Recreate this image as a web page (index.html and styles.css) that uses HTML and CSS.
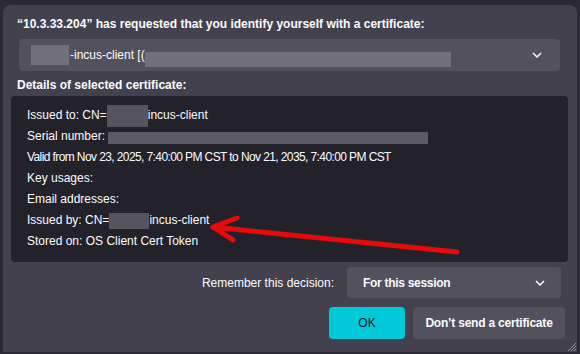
FILE: index.html
```html
<!DOCTYPE html>
<html lang="en">
<head>
  <meta charset="UTF-8" />
  <title>User Identification Request</title>
  <link rel="stylesheet" href="styles.css">
</head>
<body>
  <div class="dialog">
    <p class="title">“10.3.33.204” has requested that you identify yourself with a certificate:</p>

    <div class="select cert-select">
      <span class="value"><span class="redact r-name"></span>-incus-client [(<span class="redact r-serial-top"></span></span>
      <svg class="chevron" width="10" height="6" viewBox="0 0 10 6"><path d="M1 1l4 4 4-4" fill="none" stroke="#fbfbfe" stroke-width="1.5"/></svg>
    </div>

    <p class="label">Details of selected certificate:</p>

    <div class="details">
      <div class="line">Issued to: CN=<span class="redact r-cn"></span>incus-client</div>
      <div class="line">Serial number: <span class="redact r-serial"></span></div>
      <div class="line tight">Valid from Nov 23, 2025, 7:40:00 PM CST to Nov 21, 2035, 7:40:00 PM CST</div>
      <div class="line">Key usages:</div>
      <div class="line">Email addresses:</div>
      <div class="line">Issued by: CN=<span class="redact r-cn2"></span>incus-client</div>
      <div class="line">Stored on: OS Client Cert Token</div>

      <svg class="arrow" width="270" height="50" viewBox="0 0 270 50">
        <path d="M258 42 L14 17 M38 8 L14 17 L34 30" fill="none" stroke="#e8090b" stroke-width="5" stroke-linecap="round" stroke-linejoin="round"/>
      </svg>
    </div>

    <div class="remember">
      <span>Remember this decision:</span>
      <div class="select session-select">
        <span class="value strong">For this session</span>
        <svg class="chevron" width="10" height="6" viewBox="0 0 10 6"><path d="M1 1l4 4 4-4" fill="none" stroke="#fbfbfe" stroke-width="1.5"/></svg>
      </div>
    </div>

    <div class="buttons">
      <button class="btn primary">OK</button>
      <button class="btn">Don’t send a certificate</button>
    </div>

    <svg class="grip" width="12" height="12" viewBox="0 0 12 12">
      <path d="M11 3 L3 11 M11 6 L6 11 M11 9 L9 11" stroke="#8f8f9d" stroke-width="1"/>
    </svg>
  </div>
</body>
</html>
```

FILE: styles.css
```css
body {
  margin: 0;
  padding: 5px 3px 2px 3px;
  background: #2b2a33;
  font-family: 'Liberation Sans', Arial, sans-serif;
  font-size: 12px;
  color: #fbfbfe;
  height: 354px;
  box-sizing: border-box;
  overflow: hidden;
}

.dialog {
  position: relative;
  background: #42414d;
  border-radius: 8px 8px 0 0;
  padding: 11px 0 13px 0;
  height: 347px;
  box-sizing: border-box;
}

.title,
.label {
  margin: 0 0 0 14px;
  font-size: 12px;
  font-weight: 700;
  line-height: 16px;
}

.label {
  margin-top: 6px;
}

.select {
  display: flex;
  align-items: center;
  justify-content: space-between;
  background: #52515d;
  border-radius: 4px;
  height: 32px;
  box-sizing: border-box;
  padding: 0 18px 0 12px;
}

.cert-select {
  margin: 7px 17px 0 16px;
}

.value {
  white-space: nowrap;
}

.strong {
  font-weight: 700;
  padding-left: 4px;
  letter-spacing: -0.3px;
}

.redact {
  display: inline-block;
  vertical-align: middle;
  background: #56555f;
}

.r-name {
  width: 38px;
  height: 20px;
  background: #72717b;
  margin-right: 1px;
}

.r-serial-top {
  width: 306px;
  height: 15px;
  background: #72717b;
  margin-top: 8px;
}

.details {
  position: relative;
  margin: 3px 9px 0 8px;
  background: #23222b;
  border-radius: 4px;
  padding: 9px 16px 10px 16px;
}

.line {
  height: 21px;
  line-height: 21px;
  white-space: nowrap;
}

.tight {
  letter-spacing: -0.6px;
}

.r-cn {
  width: 41px;
  height: 22px;
}

.r-cn2 {
  width: 40px;
  height: 16px;
}

.r-serial {
  width: 320px;
  height: 12px;
  background: #5c5b65;
  margin-top: 3px;
}

.arrow {
  position: absolute;
  left: 188px;
  top: 114px;
}

.remember {
  display: flex;
  align-items: center;
  justify-content: flex-end;
  gap: 13px;
  margin: 5px 16px 0 0;
}

.session-select {
  width: 214px;
  height: 31px;
  padding-right: 16px;
}

.buttons {
  display: flex;
  justify-content: flex-end;
  gap: 8px;
  margin: 9px 12px 0 0;
}

.btn {
  height: 32px;
  border: none;
  border-radius: 4px;
  background: #52515d;
  color: #fbfbfe;
  font-family: inherit;
  font-size: 12px;
  font-weight: 700;
  padding: 0;
  width: 152px;
  white-space: nowrap;
  letter-spacing: -0.2px;
}

.btn.primary {
  width: 76px;
  background: #00c9da;
  color: #15141a;
  font-weight: 400;
  letter-spacing: 0;
}

.grip {
  position: absolute;
  right: 0;
  bottom: 0;
}
```
